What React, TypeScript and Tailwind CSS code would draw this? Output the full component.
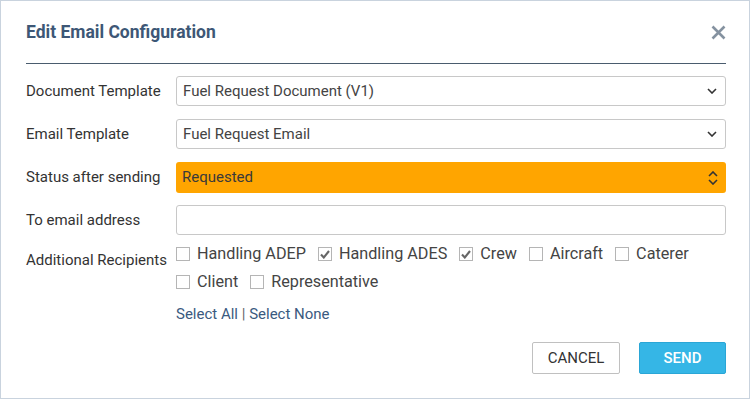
import React from "react";

const Chevron = () => (
  <svg width="10" height="6" viewBox="0 0 10 6" fill="none">
    <path d="M1 1l4 4 4-4" stroke="#333" strokeWidth="1.6" />
  </svg>
);

const UpDown = () => (
  <svg width="10" height="14" viewBox="0 0 10 14" fill="none">
    <path d="M1 5l4-4 4 4" stroke="#333" strokeWidth="1.6" />
    <path d="M1 9l4 4 4-4" stroke="#333" strokeWidth="1.6" />
  </svg>
);

function Box({ checked }: { checked?: boolean }) {
  return (
    <span className="w-[14px] h-[14px] border border-[#b5b5b5] bg-white flex items-center justify-center shrink-0">
      {checked && (
        <svg width="10" height="9" viewBox="0 0 10 9" fill="none">
          <path d="M1 4.5l2.8 3L9 1" stroke="#666" strokeWidth="2.1" />
        </svg>
      )}
    </span>
  );
}

function Item({ label, checked }: { label: string; checked?: boolean }) {
  return (
    <div className="h-[28px] flex items-center gap-[7px] mr-[12px]">
      <Box checked={checked} />
      <span className="text-[16.2px] text-[#444]">{label}</span>
    </div>
  );
}

function Row({ label, children }: { label: string; children: React.ReactNode }) {
  return (
    <div className="flex items-center h-[30px]">
      <div className="w-[150px] shrink-0 text-[15px] text-[#333]">{label}</div>
      <div className="flex-1 h-full">{children}</div>
    </div>
  );
}

export default function App() {
  return (
    <div
      className="w-[750px] h-[399px] border border-[#c9d3de] bg-white"
      style={{ fontFamily: "Roboto, 'Liberation Sans', sans-serif" }}
    >
      <div className="pl-[25px] pr-[23px]">
        <div className="h-[62px] flex items-center justify-between border-b border-[#4a5c6e] box-content">
          <div className="text-[17.5px] font-bold text-[#3d5776]">Edit Email Configuration</div>
          <svg width="15" height="15" viewBox="0 0 15 15" fill="none">
            <path d="M1.5 1.5l12 12M13.5 1.5l-12 12" stroke="#8592a0" strokeWidth="2.6" />
          </svg>
        </div>

        <div className="mt-[12px] flex flex-col gap-[13px]">
          <Row label="Document Template">
            <div className="h-full border border-[#c8c8c8] rounded-[3px] flex items-center justify-between pl-[6px] pr-[8px] text-[15px] text-[#444]">
              <span>Fuel Request Document (V1)</span>
              <Chevron />
            </div>
          </Row>
          <Row label="Email Template">
            <div className="h-full border border-[#c8c8c8] rounded-[3px] flex items-center justify-between pl-[6px] pr-[8px] text-[15px] text-[#444]">
              <span>Fuel Request Email</span>
              <Chevron />
            </div>
          </Row>
          <Row label="Status after sending">
            <div className="h-[31px] bg-[#ffa500] rounded-[3px] flex items-center justify-between pl-[6px] pr-[8px] text-[15px] text-[#3a3a3a]">
              <span>Requested</span>
              <UpDown />
            </div>
          </Row>
          <Row label="To email address">
            <div className="h-full border border-[#c8c8c8] rounded-[3px]" />
          </Row>
        </div>

        <div className="mt-[5px] flex">
          <div className="w-[150px] shrink-0 pt-[10px] text-[15px] text-[#333] leading-[20px]">
            Additional Recipients
          </div>
          <div className="flex-1">
            <div className="flex flex-wrap">
              <Item label="Handling ADEP" />
              <Item label="Handling ADES" checked />
              <Item label="Crew" checked />
              <Item label="Aircraft" />
              <Item label="Caterer" />
              <Item label="Client" />
              <Item label="Representative" />
            </div>
            <div className="mt-[8px] leading-[20px] text-[15px] text-[#3a5a80]">
              Select All <span className="text-[#666]">|</span> Select None
            </div>
          </div>
        </div>

        <div className="mt-[18px] flex justify-end gap-[19px]">
          <button className="w-[88px] h-[32px] border border-[#c0c0c0] rounded-[2px] bg-white text-[15px] text-[#333]">
            CANCEL
          </button>
          <button className="w-[87px] h-[32px] rounded-[2px] bg-[#35b6e6] border border-[#2aa6d6] text-[15px] font-medium text-white">
            SEND
          </button>
        </div>
      </div>
    </div>
  );
}
